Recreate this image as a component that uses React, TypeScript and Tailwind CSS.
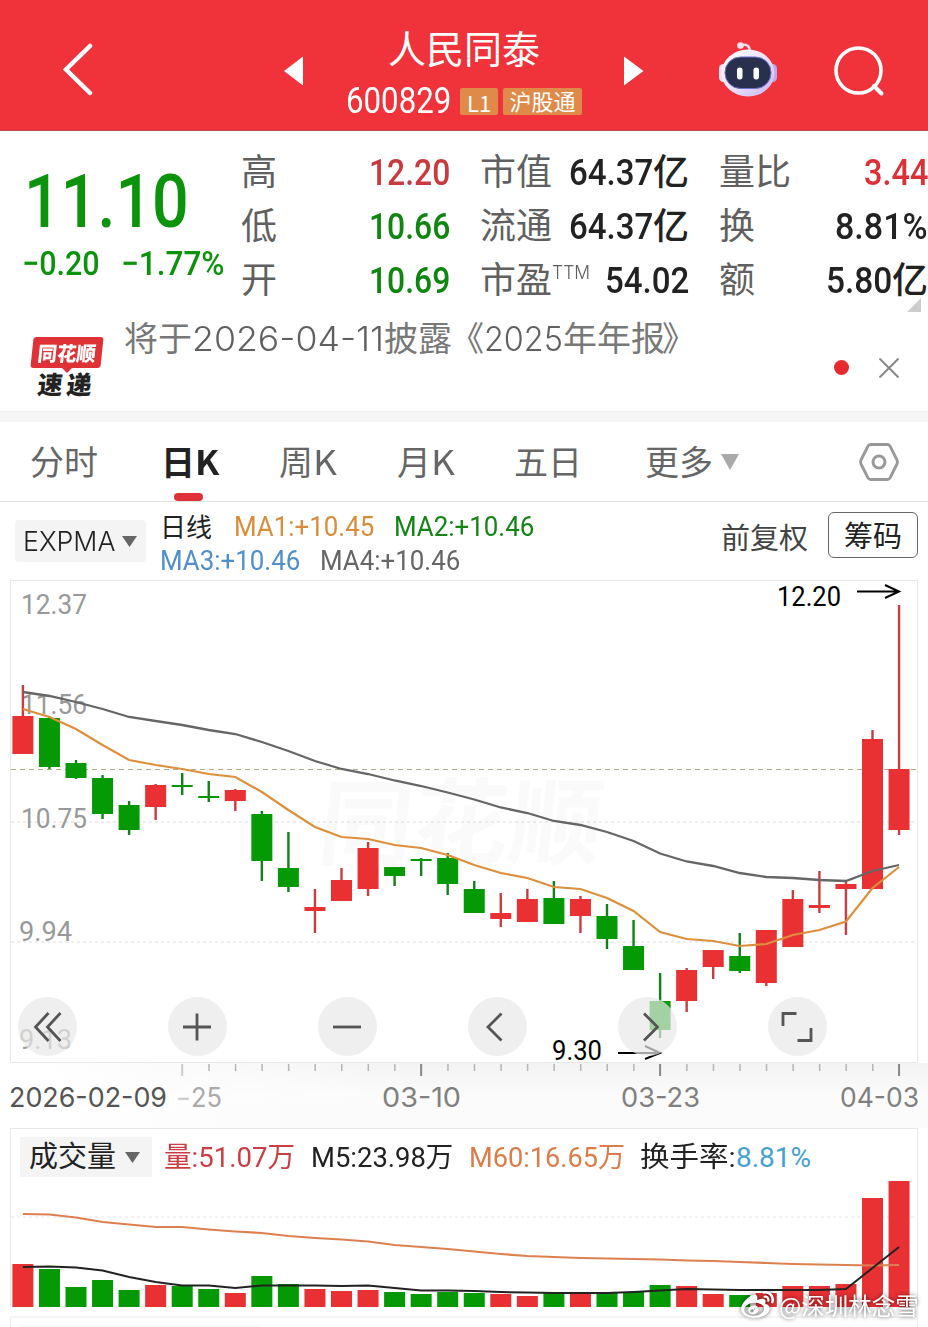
import { useLayoutEffect, useRef, useState } from "react";
import type { ReactNode } from "react";
import { FaWeibo } from "react-icons/fa";

const RED = "#e93033";
const GREEN = "#059905";
const STEP = 26.55;
const FIRST_X = 22.9;

// [up, high, bodyTop, bodyBottom, low, volumeTop]
const candles: [boolean, number, number, number, number, number][] = [
  [true, 685, 716, 754, 754, 1264],
  [false, 716, 718, 767, 769, 1269],
  [false, 760, 763, 778, 779, 1287],
  [false, 775, 778, 814, 819, 1280],
  [false, 801, 805, 830, 835, 1290],
  [true, 784, 785, 807, 820, 1285],
  [false, 773, 785, 787, 795, 1286],
  [false, 781, 796, 798, 802, 1289],
  [true, 789, 790, 801, 811, 1293],
  [false, 811, 814, 861, 881, 1276],
  [false, 832, 868, 887, 892, 1284],
  [true, 889, 907, 911, 933, 1289],
  [true, 868, 880, 901, 901, 1291],
  [true, 842, 848, 889, 896, 1290],
  [false, 867, 867, 876, 886, 1292],
  [false, 858, 859, 861, 876, 1294],
  [false, 853, 858, 884, 895, 1292],
  [false, 881, 889, 913, 913, 1293],
  [true, 893, 913, 919, 927, 1294],
  [true, 889, 899, 922, 922, 1296],
  [false, 881, 898, 924, 924, 1292],
  [true, 896, 899, 916, 933, 1293],
  [false, 904, 916, 939, 949, 1292],
  [false, 920, 946, 970, 970, 1292],
  [false, 973, 1001, 1030, 1038, 1285],
  [true, 968, 970, 1001, 1012, 1286],
  [true, 950, 950, 967, 979, 1294],
  [false, 933, 956, 971, 973, 1295],
  [true, 930, 930, 983, 986, 1293],
  [true, 890, 899, 947, 947, 1286],
  [true, 871, 905, 908, 913, 1286],
  [true, 882, 884, 889, 935, 1284],
  [true, 730, 739, 889, 889, 1198],
  [true, 605, 769, 830, 835, 1181],
];

const ma1 = [
  709, 717, 729, 745, 760, 765, 769, 774, 777, 792, 810, 827, 837, 839, 845, 848, 855, 865, 873, 878, 887, 889, 898,
  911, 932, 939, 941, 946, 944, 935, 930, 921.5, 888, 867,
];
const ma4 = [
  692, 696, 702, 709, 717, 721, 725, 730, 734, 742, 751, 761, 769, 774, 780.5, 786, 792.5, 799.5, 807.5, 813, 821, 825,
  832, 841, 853.5, 861.5, 866, 873, 877, 878, 880, 881, 871, 865,
];
const m60 = [
  1214, 1214.5, 1217.5, 1222, 1224.5, 1227, 1227, 1229.5, 1231.5, 1233, 1236, 1238, 1239.5, 1241.5, 1245, 1247, 1249,
  1251.5, 1254, 1256, 1257, 1258, 1258.5, 1259, 1259.5, 1260.5, 1261, 1262, 1263, 1264, 1264.5, 1265, 1265.5, 1265,
];
const m5 = [
  1267, 1266.5, 1267.5, 1270.5, 1277, 1282, 1285.5, 1285.5, 1288, 1285.5, 1285.5, 1285.5, 1286, 1285.5, 1288, 1290.5,
  1290.5, 1291, 1292, 1292.5, 1293, 1293, 1293, 1292, 1290.5, 1289, 1289.5, 1290, 1290, 1290, 1290, 1289, 1268, 1247,
];

const xAt = (i: number) => FIRST_X + i * STEP;
const toPoints = (ys: number[]) => ys.map((y, i) => `${xAt(i)},${y}`).join(" ");

// Squeezes its text horizontally so that it fills exactly `w` pixels
function Fit({ w, className = "", children }: { w: number; className?: string; children: ReactNode }) {
  const ref = useRef<HTMLSpanElement>(null);
  const [scale, setScale] = useState(1);

  useLayoutEffect(() => {
    if (ref.current) setScale(w / ref.current.offsetWidth);
  }, [w]);

  return (
    <span className={`inline-flex shrink-0 whitespace-nowrap ${className}`} style={{ width: w }}>
      <span ref={ref} className="origin-left shrink-0" style={{ transform: `scaleX(${scale})` }}>
        {children}
      </span>
    </span>
  );
}

function Robot() {
  return (
    <svg width="60" height="58" viewBox="0 0 60 58">
      <defs>
        <linearGradient id="shell" x1="0" y1="0" x2="1" y2="1">
          <stop offset="0" stopColor="#fff" />
          <stop offset="0.55" stopColor="#e9e0fb" />
          <stop offset="1" stopColor="#c3b0f0" />
        </linearGradient>
      </defs>
      <path d="M23 5 Q31 3 32 11" fill="none" stroke="#fbdcea" strokeWidth="2.4" />
      <circle cx="22.500" cy="5.500" r="3.300" fill="#fde3ee" />
      <rect x="1" y="24" width="9" height="18" rx="4.500" fill="#eddffa" />
      <rect x="50" y="24" width="9" height="18" rx="4.500" fill="#bca9ee" />
      <ellipse cx="30" cy="33" rx="26.500" ry="23.500" fill="url(#shell)" />
      <rect x="7" y="17" width="46" height="31.500" rx="15.500" fill="#28304e" stroke="#6f6fd0" strokeWidth="1" />
      <rect x="19" y="27.500" width="5.500" height="12" rx="2.700" fill="#fff" />
      <rect x="35.500" y="27.500" width="5.500" height="12" rx="2.700" fill="#fff" />
    </svg>
  );
}

function Header() {
  return (
    <header className="flex h-[131px] items-start border-b border-[#c0474b] bg-[#f0323a] text-white">
      <svg className="mt-[42px] ml-[62px]" width="32" height="54" viewBox="0 0 32 54">
        <path d="M28 4 L4 27.500 L28 51" fill="none" stroke="#fff" strokeWidth="4.500" strokeLinecap="round" />
      </svg>
      <svg className="mt-[56px] ml-[190px]" width="20" height="30" viewBox="0 0 20 30">
        <path d="M0 15 L19 0.500 V29.500 Z" fill="#fff" />
      </svg>
      <div className="ml-[42px] flex w-[236px] flex-col">
        <div className="mt-[19px] ml-[42px] h-[56px] text-[38px] leading-[56px] font-normal">人民同泰</div>
        <div className="mt-[13px] flex h-[27px] items-center">
          <Fit w={105} className="font-[Roboto] text-[36px] leading-[29px]">
            600829
          </Fit>
          <span className="ml-[9px] flex h-[27px] w-[38px] items-center justify-center rounded-[2px] bg-[#e08a4a]">
            <Fit w={24} className="text-[22px] leading-[24px]">
              L1
            </Fit>
          </span>
          <span className="ml-[5px] flex h-[27px] w-[79px] justify-center rounded-[2px] bg-[#e08a4a] text-[22px] leading-[24px]">
            沪股通
          </span>
        </div>
      </div>
      <svg className="mt-[56px] ml-[42px]" width="20" height="30" viewBox="0 0 20 30">
        <path d="M19.500 15 L0 0.500 V29.500 Z" fill="#fff" />
      </svg>
      <div className="mt-[40px] ml-[74px]">
        <Robot />
      </div>
      <svg className="mt-[45px] ml-[56px]" width="52" height="52" viewBox="0 0 52 52">
        <circle cx="24.500" cy="25.500" r="22.500" fill="none" stroke="#fff" strokeWidth="3.600" />
        <path d="M40 41 L47.500 48.500" stroke="#fff" strokeWidth="4" strokeLinecap="round" />
      </svg>
    </header>
  );
}

function Stat({
  label,
  sup,
  value,
  w,
  unit,
  tone = "text-[#222]",
}: {
  label: string;
  sup?: string;
  value: string;
  w: number;
  unit?: string;
  tone?: string;
}) {
  return (
    <div className="flex h-[54px] justify-between">
      <div className="flex text-[36px] leading-[49px] font-normal text-[#606060]">
        {label}
        {sup && (
          <Fit w={38} className="font-[Inter] text-[18px] leading-[40px] font-light">
            {sup}
          </Fit>
        )}
      </div>
      <div className={`flex ${tone}`}>
        <Fit w={w} className="font-[Roboto] text-[37px] leading-[55px] font-medium">
          {value}
        </Fit>
        {unit && <span className="w-[36px] text-[36px] leading-[49px] font-medium">{unit}</span>}
      </div>
    </div>
  );
}

function Quote() {
  return (
    <section className="flex h-[179px] pt-[14px]">
      <div className="w-[241px] pl-[22px] text-[#0b930b]">
        <Fit w={165} className="mt-[14px] ml-[2px] h-[86px] font-[Roboto] text-[74px] leading-[86px] font-medium">
          11.10
        </Fit>
        <div className="mt-[1px] flex h-[34px] gap-[21px] font-[Roboto] text-[34px] leading-[34px] font-medium">
          <Fit w={78}>−0.20</Fit>
          <Fit w={104}>−1.77%</Fit>
        </div>
      </div>
      <div className="mr-[30px] w-[209px]">
        <Stat label="高" value="12.20" w={81} tone="text-[#c93a40]" />
        <Stat label="低" value="10.66" w={81} tone="text-[#0f860f]" />
        <Stat label="开" value="10.69" w={81} tone="text-[#0f860f]" />
      </div>
      <div className="mr-[30px] w-[209px]">
        <Stat label="市值" value="64.37" w={84} unit="亿" />
        <Stat label="流通" value="64.37" w={84} unit="亿" />
        <Stat label="市盈" sup="TTM" value="54.02" w={84} />
      </div>
      <div className="relative w-[209px]">
        <Stat label="量比" value="3.44" w={64} tone="text-[#dc2f36]" />
        <Stat label="换" value="8.81%" w={93} />
        <Stat label="额" value="5.80" w={66} unit="亿" />
        <svg className="absolute top-[153px] right-[7px]" width="14" height="14" viewBox="0 0 14 14">
          <path d="M14 0 V14 H0 Z" fill="#ccc" />
        </svg>
      </div>
    </section>
  );
}

function News() {
  return (
    <section className="flex h-[102px] border-b border-[#f0f0f0]">
      <div className="mt-[27px] ml-[30px] flex w-[74px] flex-col items-center">
        <div className="flex h-[31px] w-[70px] -skew-x-6 items-center justify-center rounded-[3px] bg-[#de3237]">
          <Fit w={58} className="text-[20px] leading-[30px] font-black text-white">
            同花顺
          </Fit>
        </div>
        <svg className="-mt-px" width="12" height="6" viewBox="0 0 12 6">
          <path d="M0 0 H12 L6 6 Z" fill="#de3237" />
        </svg>
        <div className="-mt-[3px] -ml-[3px] flex -skew-x-6 gap-[4px] text-[25px] leading-[26px] font-black text-[#222]">
          <span>速</span>
          <span>递</span>
        </div>
      </div>
      <div className="mt-[2px] ml-[20px] flex h-[50px] w-[710px] text-[34px] leading-[50px] font-normal text-[#787878]">
        <span>将于</span>
        <Fit w={192} className="font-[Inter] leading-[54px] font-light text-[#606060]">
          2026-04-11
        </Fit>
        <span>披露</span>
        <span className="-ml-[2px]">《</span>
        <Fit w={79} className="font-[Inter] leading-[54px] font-light text-[#606060]">
          2025
        </Fit>
        <span>年年报</span>
        <span className="-ml-[3px]">》</span>
      </div>
      <div className="mt-[50px] h-[15px] w-[15px] rounded-full bg-[#e62a30]" />
      <svg className="mt-[48px] ml-[30px]" width="20" height="20" viewBox="0 0 20 20">
        <path d="M0.500 0.500 L19.500 19.500 M19.500 0.500 L0.500 19.500" stroke="#888" strokeWidth="2" />
      </svg>
    </section>
  );
}

function Tabs() {
  return (
    <nav className="flex h-[80px] border-b border-[#e2e2e2] text-[34px] leading-[78px] font-normal text-[#666]">
      <span className="ml-[30px] w-[131px]">分时</span>
      <span className="relative w-[118px] font-bold text-[#222]">
        日<Fit w={24}>K</Fit>
        <span className="absolute bottom-0 left-[13px] h-[8px] w-[29px] rounded-[4px] bg-[#de3237]" />
      </span>
      <span className="w-[118px]">
        周<Fit w={24}>K</Fit>
      </span>
      <span className="w-[117px]">
        月<Fit w={24}>K</Fit>
      </span>
      <span className="w-[131px]">五日</span>
      <span>更多</span>
      <svg className="mt-[32px] ml-[8px]" width="18" height="16" viewBox="0 0 18 16">
        <path d="M0 0 H18 L9 16 Z" fill="#aaa" />
      </svg>
      <svg className="mt-[20px] ml-[119px]" width="42" height="40" viewBox="0 0 42 40">
        <path
          d="M12.500 2.500 H29.500 Q31 2.500 32 4 L39 18 Q40 20 39 22 L32 36 Q31 37.500 29.500 37.500 H12.500 Q11 37.500 10 36 L3 22 Q2 20 3 18 L10 4 Q11 2.500 12.500 2.500 Z"
          fill="none"
          stroke="#999"
          strokeWidth="2.800"
        />
        <circle cx="21" cy="20" r="6" fill="none" stroke="#999" strokeWidth="3" />
      </svg>
    </nav>
  );
}

function Indicators() {
  return (
    <section className="flex h-[78px]">
      <div className="mt-[18px] ml-[15px] flex h-[42px] w-[131px] items-center rounded-[4px] bg-[#f4f4f4] pl-[8px] text-[#222]">
        <Fit w={92} className="font-[Inter] text-[27px] leading-[45px] font-light">
          EXPMA
        </Fit>
        <svg className="ml-[7px]" width="15" height="11" viewBox="0 0 15 11">
          <path d="M0 0 H15 L7.500 11 Z" fill="#666" />
        </svg>
      </div>
      <div className="mt-[8px] ml-[14px] w-[561px] font-[Roboto] text-[27px] leading-[34px]">
        <div className="flex h-[34px]">
          <span className="w-[74px] font-['Noto_Sans_CJK_SC'] text-[26px] leading-[31px] text-[#222]">日线</span>
          <Fit w={140} className="mr-[20px] text-[#d98c3c]">
            MA1:+10.45
          </Fit>
          <Fit w={140} className="text-[#148414]">
            MA2:+10.46
          </Fit>
        </div>
        <div className="flex h-[34px]">
          <Fit w={140} className="mr-[20px] text-[#4f8fcc]">
            MA3:+10.46
          </Fit>
          <Fit w={140} className="text-[#666]">
            MA4:+10.46
          </Fit>
        </div>
      </div>
      <span className="mt-[13px] w-[107px] text-[29px] leading-[42px] font-normal text-[#444]">前复权</span>
      <span className="mt-[10px] flex h-[46px] w-[90px] justify-center rounded-[6px] border border-[#666] text-[29px] leading-[42px] text-[#222]">
        筹码
      </span>
    </section>
  );
}

const controls = [
  { name: "rewind", d: "M31 15 L18 29 L31 43 M43 15 L30 29 L43 43" },
  { name: "zoom in", d: "M15.500 29 H43.500 M29.500 15.500 V42.500" },
  { name: "zoom out", d: "M15.500 29 H43.500" },
  { name: "back", d: "M34 15.500 L20.500 29 L34 42.500" },
  { name: "forward", d: "M25.500 15.500 L39 29 L25.500 42.500" },
  { name: "fullscreen", d: "M15.500 28 V15.500 H29 M43.500 30 V42.500 H30" },
];

function PriceLabel({ x, y, w, text, fill }: { x: number; y: number; w: number; text: string; fill: string }) {
  return (
    <text x={x} y={y} textLength={w} lengthAdjust="spacingAndGlyphs" fill={fill} className="font-[Roboto] text-[27px]">
      {text}
    </text>
  );
}

function DateLabel({ x, w, text, fill }: { x: number; w: number; text: string; fill: string }) {
  return (
    <text x={x} y={1107} textLength={w} lengthAdjust="spacingAndGlyphs" fill={fill} className="font-[Inter] text-[27px]">
      {text}
    </text>
  );
}

function PriceChart() {
  return (
    <section className="relative h-[548px]">
      <svg className="block" width="928" height="548" viewBox="0 580 928 548">
        <defs>
          <linearGradient id="axis" x1="0" y1="0" x2="0" y2="1">
            <stop offset="0" stopColor="#f3f3f3" />
            <stop offset="0.5" stopColor="#fbfbfb" />
            <stop offset="1" stopColor="#fafafa" />
          </linearGradient>
          <linearGradient id="fade" x1="0" y1="0" x2="1" y2="0">
            <stop offset="0.1" stopColor="#fff" />
            <stop offset="1" stopColor="#fff" stopOpacity="0" />
          </linearGradient>
        </defs>
        <rect x="0" y="1063" width="928" height="65" fill="url(#axis)" />
        <rect x="0" y="1063" width="420" height="65" fill="url(#fade)" />
        <text
          x="0"
          y="0"
          textLength="284"
          transform="translate(316 857) skewX(-6)"
          fill="#fafafa"
          className="font-['Noto_Sans_CJK_SC'] text-[94px] font-bold"
        >
          同花顺
        </text>
        <rect x="10.500" y="580.500" width="907" height="482" fill="none" stroke="#e8e8e8" />
        <path d="M11 822 H917 M11 942 H917" stroke="#dcdcdc" strokeWidth="1" strokeDasharray="3 3" />
        <path d="M11 769.500 H917" stroke="#b0ad80" strokeWidth="1" strokeDasharray="5 4" />

        <PriceLabel x={21} y={614} w={66} text="12.37" fill="#999" />
        <PriceLabel x={21} y={714} w={66} text="11.56" fill="#999" />
        <PriceLabel x={21} y={828} w={66} text="10.75" fill="#999" />
        <PriceLabel x={19} y={941} w={53} text="9.94" fill="#999" />
        <PriceLabel x={19} y={1049} w={53} text="9.13" fill="#999" />

        {candles.map(([up, high, top, bottom, low], i) => (
          <g key={i} fill={up ? RED : GREEN}>
            <rect x={xAt(i) - 1.2} y={high} width="2.400" height={low - high} fill={up ? "#c93c40" : "#12801a"} />
            <rect x={xAt(i) - 10.5} y={top} width="21" height={bottom - top} />
          </g>
        ))}
        <polyline points={toPoints(ma4)} fill="none" stroke="#666" strokeWidth="2.300" />
        <polyline points={toPoints(ma1)} fill="none" stroke="#dd8f3c" strokeWidth="2.200" />

        <PriceLabel x={777} y={606} w={64} text="12.20" fill="#000" />
        <path d="M857 591.500 H898 M885 585 L899 591.500 L885 598" fill="none" stroke="#000" strokeWidth="2" />
        <PriceLabel x={552} y={1060} w={50} text="9.30" fill="#000" />
        <path d="M618 1053 H659 M645 1046 L660 1053 L645 1059" fill="none" stroke="#000" strokeWidth="2" />

        {candles.map((_, i) => {
          const major = i === 6 || i === 15 || i === 24 || i === 33;
          if (i < 6) return null;
          return (
            <rect
              key={i}
              x={xAt(i) - (major ? 1 : 0.5)}
              y="1064"
              width={major ? 2 : 1.5}
              height={major ? 12 : 7}
              fill={i === 6 ? "#ccc" : major ? "#888" : "#b5b5b5"}
            />
          );
        })}
        <DateLabel x={9} w={158} text="2026-02-09" fill="#555" />
        <DateLabel x={176} w={15} text="-" fill="#ccc" />
        <DateLabel x={191} w={31} text="25" fill="#aaa" />
        <DateLabel x={382} w={79} text="03-10" fill="#808080" />
        <DateLabel x={621} w={79} text="03-23" fill="#808080" />
        <DateLabel x={840} w={79} text="04-03" fill="#808080" />
      </svg>
      <div className="absolute top-[417px] left-[18px] flex gap-[91px]">
        {controls.map((c) => (
          <button key={c.name} aria-label={c.name} className="h-[59px] w-[59px] rounded-full bg-[#e8e8e8]/70">
            <svg width="59" height="59" viewBox="0 0 59 59">
              <path
                d={c.d}
                transform={c.name === "forward" ? "translate(0.500 1)" : "translate(-0.500 1)"}
                fill="none"
                stroke="#555"
                strokeWidth="2.800"
              />
            </svg>
          </button>
        ))}
      </div>
    </section>
  );
}

function Volume() {
  return (
    <section className="relative h-[199px]">
      <div className="mx-[10px] flex h-[49px] border-x border-t border-[#e8e8e8] pt-[8px] font-[Roboto,'Noto_Sans_CJK_SC'] text-[28px] leading-[42px]">
        <span className="ml-[9px] flex h-[40px] w-[132px] items-center bg-[#f4f4f4] pl-[9px] text-[29px] text-[#222]">
          成交量
          <svg className="ml-[9px]" width="15" height="11" viewBox="0 0 15 11">
            <path d="M0 0 H15 L7.500 11 Z" fill="#666" />
          </svg>
        </span>
        <Fit w={131} className="ml-[12px] text-[#cb3d42]">
          量:51.07万
        </Fit>
        <Fit w={142} className="ml-[16px] text-[#222]">
          M5:23.98万
        </Fit>
        <Fit w={156} className="ml-[16px] text-[#dd7c48]">
          M60:16.65万
        </Fit>
        <Fit w={96} className="ml-[15px] text-[#222]">
          换手率:
        </Fit>
        <Fit w={75} className="text-[#45a0d2]">
          8.81%
        </Fit>
      </div>
      <svg className="block" width="928" height="150" viewBox="0 1177 928 150">
        <path d="M10.500 1177 V1307 M917.500 1177 V1307" stroke="#e8e8e8" />
        <path d="M10.500 1327 V1317 H917.500 V1327" fill="none" stroke="#ececec" />
        <rect x="20" y="1326" width="240" height="1" fill="#f4f4f4" />
        <path d="M11 1217 H917" stroke="#e4e4e4" strokeDasharray="3 3" />
        {candles.map(([up, , , , , top], i) => (
          <rect key={i} x={xAt(i) - 10.5} y={top} width="21" height={1307 - top} fill={up ? RED : GREEN} />
        ))}
        <polyline points={toPoints(m60)} fill="none" stroke="#dd8050" strokeWidth="2.200" />
        <polyline points={toPoints(m5)} fill="none" stroke="#222" strokeWidth="2" />
      </svg>
      <div className="absolute right-[9px] bottom-[5px] flex items-center gap-[5px] text-[23.5px] leading-[34px] text-white drop-shadow-[0_0_2px_rgba(0,0,0,0.65)]">
        <FaWeibo size={33} />
        <Fit w={140}>@深圳林念雪</Fit>
      </div>
    </section>
  );
}

export default function App() {
  return (
    <main className="h-[1327px] w-[928px] overflow-hidden bg-white font-['Noto_Sans_CJK_SC',sans-serif]">
      <Header />
      <Quote />
      <News />
      <div className="h-[10px] bg-[#f5f5f5]" />
      <Tabs />
      <Indicators />
      <PriceChart />
      <Volume />
    </main>
  );
}
